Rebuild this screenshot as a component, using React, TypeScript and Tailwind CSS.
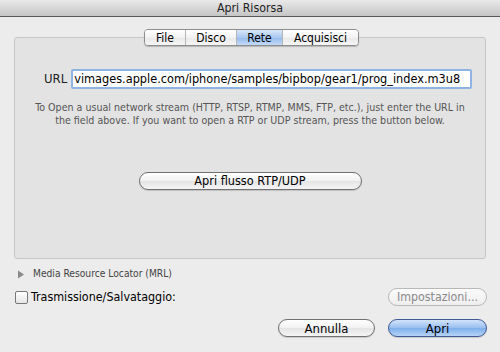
import React from 'react'

const font = { fontFamily: '"Lucida Grande", "DejaVu Sans Condensed", "DejaVu Sans", sans-serif' }

function AquaButton({ label, primary, disabled, className }: { label: string; primary?: boolean; disabled?: boolean; className?: string }) {
  const base = 'h-[18px] rounded-full border leading-none flex items-center justify-center shadow-[0_1px_1px_rgba(0,0,0,0.15)]'
  const look = primary
    ? 'border-[#3f5a94] bg-[linear-gradient(#d2e4fb,#97bef0_50%,#7eaeeb_51%,#b6d4f7)] text-black'
    : disabled
      ? 'border-[#b8b8b8] bg-[linear-gradient(#fbfbfb,#eeeeee)] text-[#8a8a8a] shadow-none'
      : 'border-[#707070] bg-[linear-gradient(#ffffff,#f1f1f1_50%,#e4e4e4_51%,#f5f5f5)] text-black'
  return <div className={`${base} ${look} ${className ?? ''}`}>{label}</div>
}

export default function App() {
  const tabs = ['File', 'Disco', 'Rete', 'Acquisisci']
  const widths = ['w-[40px]', 'w-[51px]', 'w-[46px]', 'w-[76px]']

  return (
    <div className="w-[500px] h-[352px] bg-[#ececec] flex flex-col overflow-hidden" style={font}>
      <div className="h-[17px] shrink-0 bg-[linear-gradient(#e9e9e9,#c5c5c5)] border-b border-[#575757] flex items-center justify-center text-[12.3px] text-[#222]">
        Apri Risorsa
      </div>

      <div className="flex flex-col px-[14px] pt-[12px]">
        <div className="flex justify-center -mb-[9px] relative z-10 pl-[3px]">
          <div className="flex h-[17px] rounded-[4px] border border-[#8c8c8c] overflow-hidden shadow-[0_1px_1px_rgba(0,0,0,0.2)]">
            {tabs.map((t, i) => (
              <div
                key={t}
                className={`${widths[i]} flex items-center justify-center text-[12px] text-black ${i > 0 ? 'border-l border-[#b5b5b5]' : ''} ${t === 'Rete' ? 'bg-[linear-gradient(#d9e7f8,#a9c8ef_50%,#93baec_51%,#c4dbf7)]' : 'bg-[linear-gradient(#ffffff,#f3f3f3_50%,#e8e8e8_51%,#f6f6f6)]'}`}
              >
                {t}
              </div>
            ))}
          </div>
        </div>

        <div className="h-[222px] border border-[#c6c6c6] rounded-[3px] bg-[#e3e3e3] flex flex-col items-center">
          <div className="flex items-center mt-[31px] w-full pl-[29px]">
            <span className="text-[13px] text-[#222] mr-[4px]">URL</span>
            <div className="w-[401px] h-[20px] border-2 border-[#8fb3e3] rounded-[2px] bg-white flex items-center px-[1px] overflow-hidden whitespace-nowrap text-[12.6px] text-black">
              vimages.apple.com/iphone/samples/bipbop/gear1/prog_index.m3u8
            </div>
          </div>
          <p className="mt-[12px] text-center text-[10.6px] leading-[13px] text-[#555] w-[440px]">
            To Open a usual network stream (HTTP, RTSP, RTMP, MMS, FTP, etc.), just enter the URL in the field above. If you want to open a RTP or UDP stream, press the button below.
          </p>
          <AquaButton label="Apri flusso RTP/UDP" className="w-[223px] mt-[45px] text-[12.6px]" />
        </div>

        <div className="flex items-center h-[14px] mt-[8px] text-[10.2px] text-[#444]">
          <svg width="8" height="9" viewBox="0 0 8 9" className="ml-[3px] mr-[8px]"><path d="M1 0.5 L7 4.5 L1 8.5 Z" fill="#8a8a8a" /></svg>
          Media Resource Locator (MRL)
        </div>

        <div className="flex items-center justify-between mt-[7px] h-[18px]">
          <div className="flex items-center">
            <div className="w-[13px] h-[13px] ml-[1px] rounded-[2px] border border-[#777] bg-[linear-gradient(#ffffff,#e6e6e6)] mr-[3px]" />
            <span className="text-[12.4px] text-black">Trasmissione/Salvataggio:</span>
          </div>
          <AquaButton label="Impostazioni..." disabled className="w-[99px] mr-[-1px] text-[12.3px]" />
        </div>

        <div className="flex justify-end gap-[13px] mt-[13px]">
          <AquaButton label="Annulla" className="w-[97px] text-[13px]" />
          <AquaButton label="Apri" primary className="w-[99px] mr-[-1px] text-[13px]" />
        </div>
      </div>
    </div>
  )
}
